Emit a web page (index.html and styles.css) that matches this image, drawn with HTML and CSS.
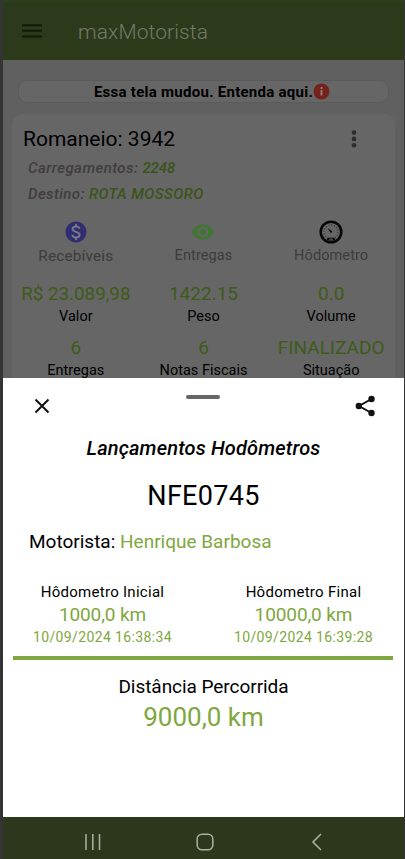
FILE: index.html
```html
<!DOCTYPE html>
<html lang="pt-BR">
<head>
<meta charset="utf-8">
<title>maxMotorista</title>
<link rel="stylesheet" href="styles.css">
</head>
<body>
<div class="phone">
  <div class="screen">
    <header class="appbar">
      <svg class="menu" width="20" height="14" viewBox="0 0 20 14"><path d="M0 1.2h20M0 6.8h20M0 12.4h20" stroke="#121a0b" stroke-width="2"/></svg>
      <h1>maxMotorista</h1>
    </header>
    <div class="notice">
      <span>Essa tela mudou. Entenda aqui.</span>
      <svg width="17" height="17" viewBox="0 0 17 17"><circle cx="8.5" cy="8.5" r="8" fill="#74221c"/><circle cx="8.5" cy="5.1" r="1.1" fill="#9a8280"/><path d="M8.500 7.200v5.200" fill="none" stroke="#9a8280" stroke-width="1.800"/></svg>
    </div>
    <section class="card">
      <div class="card-head">
        <h2>Romaneio: 3942</h2>
        <svg width="6" height="18" viewBox="0 0 6 18" fill="#2d2d2d"><circle cx="3" cy="2.6" r="2.3"/><circle cx="3" cy="8.9" r="2.3"/><circle cx="3" cy="15.2" r="2.3"/></svg>
      </div>
      <p class="meta">Carregamentos: <b class="load">2248</b></p>
      <p class="meta wide">Destino: <b class="dest">ROTA MOSSORO</b></p>
      <div class="actions">
        <div class="action">
          <svg width="24" height="24" viewBox="0 0 24 24"><circle cx="12" cy="12" r="10.5" fill="#312d70"/><path d="M15.500 8.800C15.200 7.200 13.900 6.500 12 6.500c-2 0-3.400 1-3.400 2.600 0 3.700 7 2 7 5.700 0 1.700-1.500 2.700-3.600 2.700s-3.500-1-3.700-2.800M12 4v3M12 17v3" fill="none" stroke="#77768a" stroke-width="2"/></svg>
          <span class="recv">Recebíveis</span>
        </div>
        <div class="action">
          <svg width="24" height="24" viewBox="0 0 24 24"><path fill="#427434" fill-rule="evenodd" d="M12 4.500C7 4.500 2.700 7.600 1 12c1.700 4.400 6 7.500 11 7.500s9.300-3.100 11-7.500C21.300 7.600 17 4.500 12 4.500zM12 17a5 5 0 1 1 0-10 5 5 0 0 1 0 10zm0-8a3 3 0 1 0 0 6 3 3 0 0 0 0-6z"/></svg>
          <span>Entregas</span>
        </div>
        <div class="action">
          <svg width="24" height="24" viewBox="0 0 24 24"><circle cx="12" cy="12" r="10.300" fill="none" stroke="#070707" stroke-width="2.500"/><circle cx="12" cy="12" r="7" fill="none" stroke="#343434" stroke-width="1.300" stroke-dasharray="1 1.750"/><path d="M8.500 8l4.800 3.600-1.300 1.700z" fill="#080808"/><path d="M7.300 20.500l1.500-2.700h6.400l1.500 2.700z" fill="#080808"/><path d="M10 19.200h4" stroke="#555" stroke-width="1.200"/></svg>
          <span>Hôdometro</span>
        </div>
      </div>
      <div class="stats">
        <div class="stat"><strong class="money">R$ 23.089,98</strong><span>Valor</span></div>
        <div class="stat"><strong>1422.15</strong><span>Peso</span></div>
        <div class="stat"><strong>0.0</strong><span>Volume</span></div>
        <div class="stat"><strong>6</strong><span>Entregas</span></div>
        <div class="stat"><strong>6</strong><span>Notas Fiscais</span></div>
        <div class="stat"><strong>FINALIZADO</strong><span>Situação</span></div>
      </div>
    </section>
  </div>
  <main class="sheet">
    <div class="sheet-bar">
      <svg width="16" height="16" viewBox="0 0 16 16"><path d="M1.500 1.500l13 13M14.500 1.500l-13 13" stroke="#111" stroke-width="2"/></svg>
      <i class="handle"></i>
      <svg width="20" height="22" viewBox="0 0 20 22"><path d="M16.500 4L4 11l12.500 7" fill="none" stroke="#111" stroke-width="2"/><g fill="#111"><circle cx="16.500" cy="4" r="3.200"/><circle cx="3.800" cy="11" r="3.200"/><circle cx="16.500" cy="18" r="3.200"/></g></svg>
    </div>
    <h3>Lançamentos Hodômetros</h3>
    <div class="plate">NFE0745</div>
    <div class="driver">Motorista: <span>Henrique Barbosa</span></div>
    <div class="readings">
      <div class="reading"><span>Hôdometro Inicial</span><strong>1000,0 km</strong><time>10/09/2024 16:38:34</time></div>
      <div class="reading"><span>Hôdometro Final</span><strong>10000,0 km</strong><time>10/09/2024 16:39:28</time></div>
    </div>
    <div class="total"><span>Distância Percorrida</span><strong>9000,0 km</strong></div>
  </main>
  <nav class="navbar">
    <svg width="18" height="18" viewBox="0 0 18 18"><path d="M2 1v16M8.800 1v16M15.500 1v16" stroke="#abb2a2" stroke-width="1.500"/></svg>
    <svg width="18" height="18" viewBox="0 0 18 18"><rect x="1.200" y="1.200" width="15.600" height="15.600" rx="4.800" fill="none" stroke="#abb2a2" stroke-width="1.500"/></svg>
    <svg width="18" height="18" viewBox="0 0 18 18"><path d="M13 1L5 9l8 8" fill="none" stroke="#abb2a2" stroke-width="1.600"/></svg>
  </nav>
</div>
</body>
</html>
```
FILE: styles.css
```css
* { box-sizing: border-box; }
body { margin: 0; background: #353435; font-family: Roboto, sans-serif; color: #000; }
h1, h2, h3, p { margin: 0; font-weight: 400; }
svg { display: block; flex: none; }
strong { font-weight: 400; }
.phone { width: 401px; height: 859px; margin-left: 3px; display: flex; flex-direction: column; white-space: nowrap; }
.screen { height: 378px; overflow: hidden; background: #606060; }
.appbar { height: 60px; background: #2d391b; border-top: 2px solid #2c411a; display: flex; align-items: center; padding: 2px 0 0 19px; gap: 36px; }
.appbar h1 { font-size: 21px; font-weight: 300; color: #727b69; line-height: 26px; letter-spacing: .1px; }
.menu { margin-top: -2px; }
.notice { height: 23px; margin: 20px 15px 0; border: 1px solid #5b5b5b; border-radius: 9px; background: #666; display: flex; align-items: center; justify-content: center; gap: 0; font-size: 15px; letter-spacing: .27px; font-weight: 700; padding-left: 17px; }
.card { height: 300px; margin: 11px 9px 0; border-radius: 11px; background: #666; }
.card-head { display: flex; justify-content: space-between; align-items: center; padding: 11px 38px 0 11px; }
.card-head h2 { font-size: 21px; line-height: 28px; }
.meta { padding-left: 16px; font-size: 15px; line-height: 26px; font-style: italic; font-weight: 500; color: #403d3d; letter-spacing: .43px; position: relative; top: 2px; }
.wide { letter-spacing: .4px; }
.meta b { color: #3a5416; font-weight: 500; }
.meta .load { letter-spacing: -.1px; }
.actions, .stats { display: grid; grid-template-columns: repeat(3, 1fr); }
.actions { margin-top: 15px; }
.action { display: flex; flex-direction: column; align-items: center; font-size: 14.5px; line-height: 24px; color: #3c3c3c; letter-spacing: .1px; }
.recv { font-size: 15.3px; letter-spacing: .2px; }
.stats { margin-top: 13px; }
.stat { display: flex; flex-direction: column; align-items: center; height: 54px; font-size: 14.5px; line-height: 22px; }
.stat strong { font-size: 19px; line-height: 25px; color: #3f5b18; }
.stat .money { letter-spacing: -.1px; }
.sheet { height: 439px; background: #fff; }
.sheet-bar { height: 56px; padding: 0 29px 0 31px; display: flex; justify-content: space-between; align-items: center; }
.handle { width: 34px; height: 4px; border-radius: 2px; background: #666; margin: 0 0 18px 0; }
.sheet h3 { text-align: center; font-size: 20px; line-height: 28px; font-style: italic; font-weight: 500; letter-spacing: .15px; }
.plate { text-align: center; font-size: 27px; line-height: 34px; margin-top: 17px; letter-spacing: .3px; }
.driver { padding-left: 26px; margin-top: 15px; font-size: 19px; line-height: 28px; }
.driver span, .reading strong, .reading time, .total strong { color: #80a740; }
.readings { display: flex; justify-content: space-between; margin: 25px 11px 0 10px; height: 79px; border-bottom: 4px solid #80a740; padding: 0 20px; }
.reading { display: flex; flex-direction: column; align-items: center; font-size: 15px; line-height: 22px; letter-spacing: .28px; }
.reading strong { font-size: 19px; line-height: 24px; letter-spacing: -.1px; }
.reading time { font-size: 14px; line-height: 21px; letter-spacing: .37px; }
.total { display: flex; flex-direction: column; align-items: center; margin-top: 13px; font-size: 19px; line-height: 28px; }
.total span { letter-spacing: -.05px; }
.total strong { font-size: 26px; line-height: 33px; }
.navbar { flex: 1; background: #2c371b; display: flex; justify-content: space-between; align-items: center; padding: 7px 78px 0 81px; }
```
